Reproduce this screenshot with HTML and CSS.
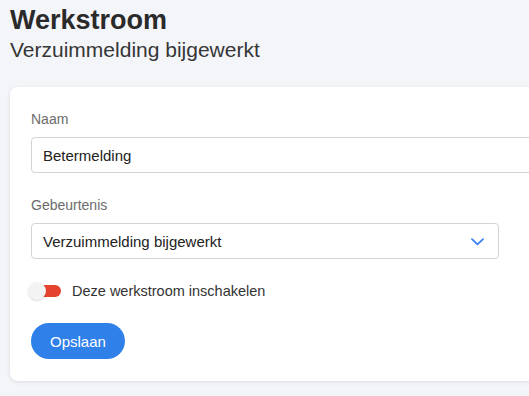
FILE: index.html
```html
<!DOCTYPE html>
<html lang="nl">
<head>
  <meta charset="UTF-8" />
  <meta name="viewport" content="width=device-width, initial-scale=1.0" />
  <title>Werkstroom</title>
  <link rel="stylesheet" href="styles.css">
</head>
<body>
  <div class="page">
    <header class="page-header">
      <h1>Werkstroom</h1>
      <div class="subtitle">Verzuimmelding bijgewerkt</div>
    </header>

    <section class="card">
      <div class="field">
        <label class="field-label" for="naam">Naam</label>
        <input type="text" id="naam" class="text-input" value="Betermelding" />
      </div>

      <div class="field">
        <div class="field-label">Gebeurtenis</div>
        <div class="select">
          <span>Verzuimmelding bijgewerkt</span>
          <svg class="chevron" width="13" height="8" viewBox="0 0 13 8">
            <path d="M1 1.2 L6.5 6.4 L12 1.2" fill="none" stroke="#3b82f6" stroke-width="1.8" stroke-linecap="round" stroke-linejoin="round"/>
          </svg>
        </div>
      </div>

      <div class="toggle-row">
        <div class="toggle">
          <div class="toggle-track"></div>
          <div class="toggle-knob"></div>
        </div>
        <span>Deze werkstroom inschakelen</span>
      </div>

      <button class="btn-primary">Opslaan</button>
    </section>
  </div>
</body>
</html>
```

FILE: styles.css
```css
body {
  margin: 0;
  background: #f4f5f9;
  font-family: 'Liberation Sans', Arial, sans-serif;
  color: #222;
}

.page {
  width: 529px;
  height: 396px;
  box-sizing: border-box;
  padding: 4px 0 0 10px;
  overflow: hidden;
}

h1 {
  margin: 0;
  font-size: 27px;
  line-height: 32px;
  font-weight: bold;
  color: #2a2a2a;
}

.subtitle {
  margin-top: 1px;
  font-size: 21px;
  line-height: 26px;
  color: #363636;
}

.card {
  margin-top: 24px;
  width: 600px;
  background: #fff;
  border-radius: 8px;
  box-shadow: 0 1px 4px rgba(0, 0, 0, 0.1);
  padding: 22px 21px 22px;
}

.field {
  margin-bottom: 22px;
}

.field-label {
  display: block;
  font-size: 14px;
  line-height: 20px;
  color: #6b6b6b;
  margin-bottom: 8px;
}

.text-input {
  box-sizing: border-box;
  display: block;
  width: 100%;
  height: 36px;
  padding: 0 11px;
  border: 1px solid #d4d4d4;
  border-radius: 4px;
  font-family: 'Liberation Sans', Arial, sans-serif;
  font-size: 15px;
  color: #222;
  outline: none;
}

.select {
  box-sizing: border-box;
  width: 468px;
  height: 36px;
  padding: 0 14px 0 11px;
  border: 1px solid #d4d4d4;
  border-radius: 4px;
  display: flex;
  align-items: center;
  justify-content: space-between;
  font-size: 15px;
  color: #222;
}

.chevron {
  display: block;
  margin-top: 2px;
}

.toggle-row {
  display: flex;
  align-items: center;
  gap: 11px;
  height: 20px;
  margin: 1px 0 0 -3px;
  font-size: 14.5px;
  color: #333;
}

.toggle {
  position: relative;
  width: 33px;
  height: 18px;
}

.toggle-track {
  position: absolute;
  left: 8px;
  right: 0;
  top: 3px;
  height: 12px;
  border-radius: 6px;
  background: #e5432e;
}

.toggle-knob {
  position: absolute;
  left: 0;
  top: 0;
  width: 18px;
  height: 18px;
  border-radius: 50%;
  background: #f3f3f3;
  box-shadow: 0 1px 2px rgba(0, 0, 0, 0.15);
}

.btn-primary {
  display: block;
  margin-top: 22px;
  height: 36px;
  padding: 0 19px;
  border: none;
  border-radius: 18px;
  background: #2f80e9;
  color: #fff;
  font-family: 'Liberation Sans', Arial, sans-serif;
  font-size: 15px;
  cursor: pointer;
}
```
